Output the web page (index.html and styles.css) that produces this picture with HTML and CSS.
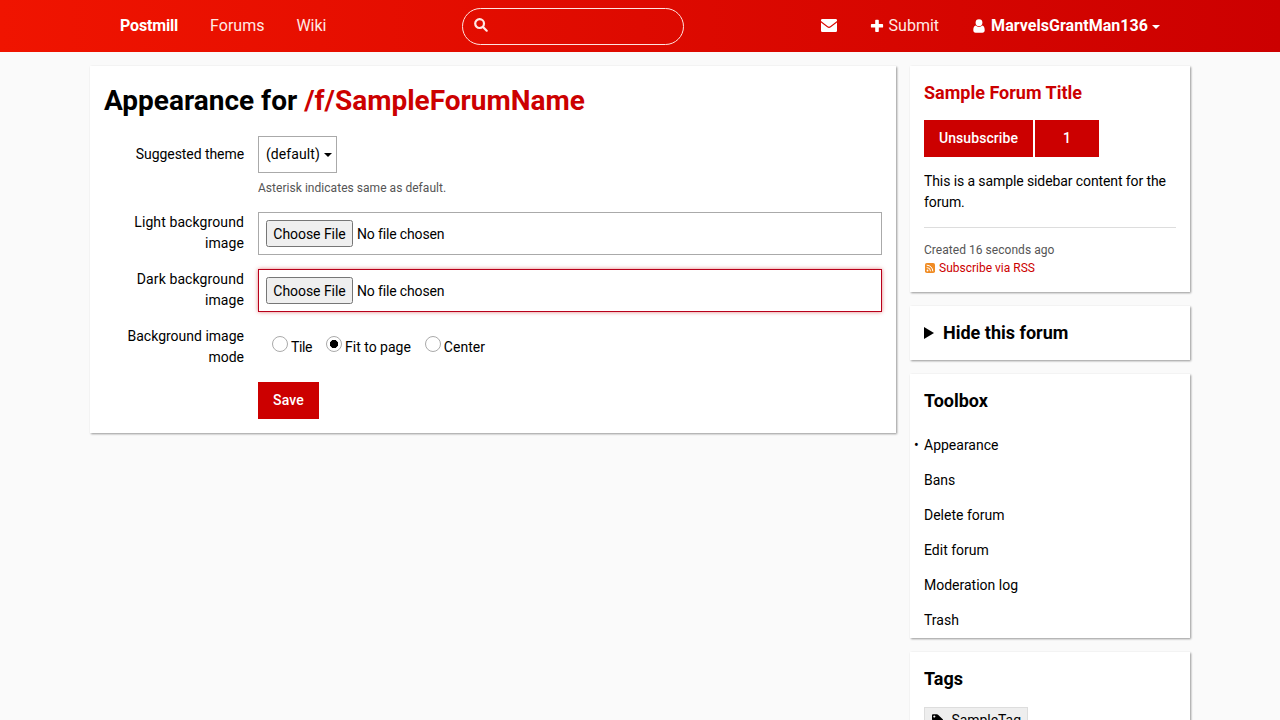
FILE: index.html
```html
<!DOCTYPE html>
<html lang="en">
<head>
<meta charset="utf-8">
<title>Appearance for /f/SampleForumName</title>
<link rel="stylesheet" href="styles.css">
</head>
<body>
<nav class="site-nav">
  <div class="site-nav__inner">
    <div class="site-nav__group">
      <a class="site-nav__link site-nav__link--bold site-nav__link--brand">Postmill</a>
      <a class="site-nav__link">Forums</a>
      <a class="site-nav__link">Wiki</a>
    </div>
    <label class="search">
      <svg class="search__icon" viewBox="0 0 14 14"><circle cx="5.6" cy="5.6" r="4.4"/><path d="M9 9l3.700 3.700"/></svg>
    </label>
    <div class="site-nav__group site-nav__group--right">
      <a class="site-nav__link"><svg class="icon-mail" viewBox="0 0 16 13"><path d="M1.300 0h13.400Q16 0 16 1.300v.6L9.200 7.200q-1.200.9-2.400 0L0 1.900v-.6Q0 0 1.300 0zM0 3.400l6.200 4.900q1.800 1.400 3.600 0L16 3.400v8.300q0 1.300-1.300 1.300H1.300Q0 13 0 11.700z"/></svg></a>
      <a class="site-nav__link"><svg class="icon-nav" viewBox="0 0 16 14"><path d="M6.200 1.400q0-.7.7-.7h2.200q.7 0 .7.700v3.600h3.600q.7 0 .7.700v2.200q0 .7-.7.700H9.800v3.600q0 .7-.7.700H6.900q-.7 0-.7-.7V8.600H2.600q-.7 0-.7-.7V5.700q0-.7.700-.7h3.600z"/></svg>Submit</a>
      <a class="site-nav__link site-nav__link--bold site-nav__link--user"><svg class="icon-nav" viewBox="0 0 16 14"><path d="M4.800 6.400C5.600 7.300 6.700 7.800 8 7.800s2.400-.5 3.200-1.400C13 6.600 13.700 8.300 13.700 11.300 13.700 13 12.900 13.700 11.400 13.700H4.600C3.100 13.700 2.300 13 2.300 11.300 2.300 8.300 3 6.600 4.800 6.400z"/><circle cx="8" cy="3.700" r="3.400"/></svg>MarvelsGrantMan136<span class="caret"></span></a>
    </div>
  </div>
</nav>
<div class="layout">
  <main class="card">
    <h1 class="page-title">Appearance for <a class="red">/f/SampleForumName</a></h1>
    <form class="form">
      <div class="row">
        <span class="row__label row__label--padded">Suggested theme</span>
        <div class="row__control">
          <button class="select" type="button">(default)<span class="caret caret--select"></span></button>
          <p class="hint">Asterisk indicates same as default.</p>
        </div>
      </div>
      <div class="row">
        <label class="row__label row__label--loose" for="light">Light background image</label>
        <input class="file" id="light" type="file">
      </div>
      <div class="row">
        <label class="row__label row__label--loose" for="dark">Dark background image</label>
        <input class="file file--focus" id="dark" type="file">
      </div>
      <div class="row">
        <span class="row__label">Background image mode</span>
        <div class="radios">
          <label class="radio"><input class="radio__dot" type="radio" name="mode"><span class="radio__text radio__text--tight">Tile</span></label>
          <label class="radio"><input class="radio__dot" type="radio" name="mode" checked><span class="radio__text">Fit to page</span></label>
          <label class="radio"><input class="radio__dot" type="radio" name="mode"><span class="radio__text">Center</span></label>
        </div>
      </div>
      <div class="row">
        <span class="row__label"></span>
        <button class="button button--save" type="button">Save</button>
      </div>
    </form>
  </main>
  <aside class="sidebar">
    <section class="card">
      <h2 class="heading red">Sample Forum Title</h2>
      <div class="subscribe">
        <button class="button button--unsubscribe" type="button">Unsubscribe</button>
        <span class="button button--count">1</span>
      </div>
      <p class="description">This is a sample sidebar content for the forum.</p>
      <div class="meta">
        <p class="meta__line">Created 16 seconds ago</p>
        <p class="meta__line red"><svg class="icon-rss" viewBox="0 0 10 10"><rect width="10" height="10" rx="1.800" fill="#f08c24"/><circle cx="2.500" cy="7.500" r=".9" fill="#fff"/><path d="M1.700 4.500a3.800 3.800 0 0 1 3.800 3.800M1.700 2.200a6.100 6.100 0 0 1 6.100 6.100" fill="none" stroke="#fff" stroke-width="1"/></svg>Subscribe via RSS</p>
      </div>
    </section>
    <section class="card">
      <h2 class="heading heading--toggle"><span class="triangle"></span>Hide this forum</h2>
    </section>
    <section class="card card--menu">
      <h2 class="heading">Toolbox</h2>
      <ul class="menu">
        <li class="menu__item menu__item--current">Appearance</li>
        <li class="menu__item">Bans</li>
        <li class="menu__item">Delete forum</li>
        <li class="menu__item">Edit forum</li>
        <li class="menu__item">Moderation log</li>
        <li class="menu__item">Trash</li>
      </ul>
    </section>
    <section class="card">
      <h2 class="heading">Tags</h2>
      <a class="tag"><svg class="icon-tag" viewBox="0 0 12 12"><path fill-rule="evenodd" d="M0 1q0-1 1-1h4q.9 0 1.600.7l4.900 4.900q.8.800 0 1.600l-4.300 4.300q-.8.800-1.600 0L.7 6.600Q0 5.900 0 5zM2.400 1.300a1.100 1.100 0 1 0 .01 0z"/></svg>SampleTag</a>
    </section>
  </aside>
</div>
</body>
</html>
```
FILE: styles.css
```css
* { box-sizing: border-box; }
html { height: 100%; overflow: hidden; }
body {
  margin: 0;
  height: 100%;
  overflow: hidden;
  background: #fafafa;
  color: #000;
  font: 14px/21px Roboto, sans-serif;
}
h1, h2, p, ul { margin: 0; padding: 0; }
button, input { font: inherit; color: inherit; margin: 0; }
.red { color: #c00; }

.site-nav {
  height: 52px;
  background: linear-gradient(to right, #f01400, #c00);
  color: #fff;
  font-size: 16px;
  line-height: 24px;
}
.site-nav__inner {
  display: grid;
  grid-template-columns: 358px 222px 1fr;
  width: 1072px;
  height: 52px;
  margin: 0 auto;
}
.site-nav__group { display: flex; align-items: center; padding-bottom: 1px; }
.site-nav__group--right { justify-content: flex-end; }
.site-nav__link { display: flex; align-items: center; padding: 0 16px; color: #ffe9e5; }
.site-nav__link--bold { font-weight: 700; color: #fff; }
.site-nav__link--brand { letter-spacing: -.17px; }
.site-nav__link--user { letter-spacing: .04px; }
.icon-mail { width: 16px; height: 13px; fill: #fff; }
.icon-nav { width: 16px; height: 14px; margin-right: 4px; fill: #fff; }
.search {
  height: 37px;
  margin-top: 8px;
  padding: 9px 11px;
  border: 1px solid #ffe3df;
  border-radius: 19px;
}
.search__icon {
  display: block;
  width: 14px;
  height: 14px;
  fill: none;
  stroke: #ffe9e5;
  stroke-width: 2.2;
  stroke-linecap: round;
}
.caret {
  width: 0;
  height: 0;
  margin: 2px 0 0 4px;
  border: 4px solid transparent;
  border-top-color: currentColor;
  border-bottom: 0;
}
.caret--select { margin: 1px 0 0 auto; }

.layout {
  display: grid;
  grid-template-columns: 1fr 280px;
  gap: 14px;
  align-items: start;
  width: 1100px;
  margin: 14px auto 0;
}
.sidebar { display: grid; gap: 14px; }
.card {
  padding: 14px;
  background: #fff;
  box-shadow: 1px 1px 2px rgba(0, 0, 0, .4);
}
.card--menu { padding-bottom: 0; }
.page-title { font-size: 28px; line-height: 42px; font-weight: 700; }
.heading { font-size: 18px; line-height: 26px; font-weight: 700; }

.form { display: grid; gap: 14px; margin-top: 14px; }
.row { display: grid; grid-template-columns: 140px 1fr; gap: 14px; align-items: start; }
.row__label { text-align: right; }
.row__label--padded { padding-top: 8px; letter-spacing: -.07px; }
.row__label--loose { letter-spacing: .1px; }
.select {
  display: flex;
  align-items: center;
  width: 79px;
  height: 37px;
  padding: 0 4px 0 7px;
  background: #fff;
  border: 1px solid #aaa;
  letter-spacing: .08px;
}
.hint { margin: 6px 0 1px; font-size: 12px; line-height: 18px; letter-spacing: .04px; color: #555; }
.file {
  width: 100%;
  height: 43px;
  padding: 7px;
  background: #fff;
  border: 1px solid #aaa;
  letter-spacing: -.15px;
}
.file::file-selector-button {
  height: 27px;
  width: 87px;
  padding: 0;
  font: inherit;
  letter-spacing: -.05px;
}
.file--focus { border-color: #b8001a; box-shadow: 0 0 4px rgba(204, 0, 0, .5); }
.radios { display: flex; gap: 14px; padding: 10px 14px 0; }
.radio { display: flex; gap: 3px; }
.radio__text { padding-top: 1px; }
.radio__text--tight { letter-spacing: -.4px; }
.radio__dot {
  appearance: none;
  width: 16px;
  height: 16px;
  border: 1px solid #aaa;
  border-radius: 50%;
  background: #fff;
}
.radio__dot:checked { background: radial-gradient(circle, #000 3.8px, #fff 4.4px); }
.button {
  justify-self: start;
  height: 37px;
  padding: 8px 0;
  border: 0;
  background: #c00;
  color: #fff;
  font-weight: 500;
  text-align: center;
}
.button--save { width: 61px; letter-spacing: .15px; }
.button--unsubscribe { width: 109px; letter-spacing: .07px; }
.button--count { width: 64px; }

.subscribe { display: flex; gap: 2px; margin-top: 14px; }
.description { margin-top: 14px; letter-spacing: -.1px; }
.meta {
  margin-top: 14px;
  padding: 13px 0 1px;
  border-top: 1px solid #ddd;
  color: #555;
  font-size: 12px;
  line-height: 18px;
}
.meta__line { letter-spacing: .04px; }
.meta__line.red { display: flex; align-items: center; color: #c00; letter-spacing: 0; }
.icon-rss { width: 10px; height: 10px; margin: 0 4px 0 1px; }
.heading--toggle { display: flex; align-items: center; }
.triangle {
  width: 0;
  height: 0;
  margin-right: 9px;
  border: 6px solid transparent;
  border-left: 10px solid #000;
  border-right: 0;
}
.menu { margin-top: 14px; list-style: none; }
.menu__item { position: relative; padding: 7px 0; }
.menu__item--current::before { content: "•"; position: absolute; left: -10px; }
.tag {
  display: inline-flex;
  align-items: center;
  width: 104px;
  height: 26px;
  margin-top: 15px;
  padding: 0 6px 0 7px;
  border: 1px solid #ddd;
  background: #eee;
  letter-spacing: -.05px;
}
.icon-tag { width: 12px; height: 12px; margin-right: 8px; }
```
